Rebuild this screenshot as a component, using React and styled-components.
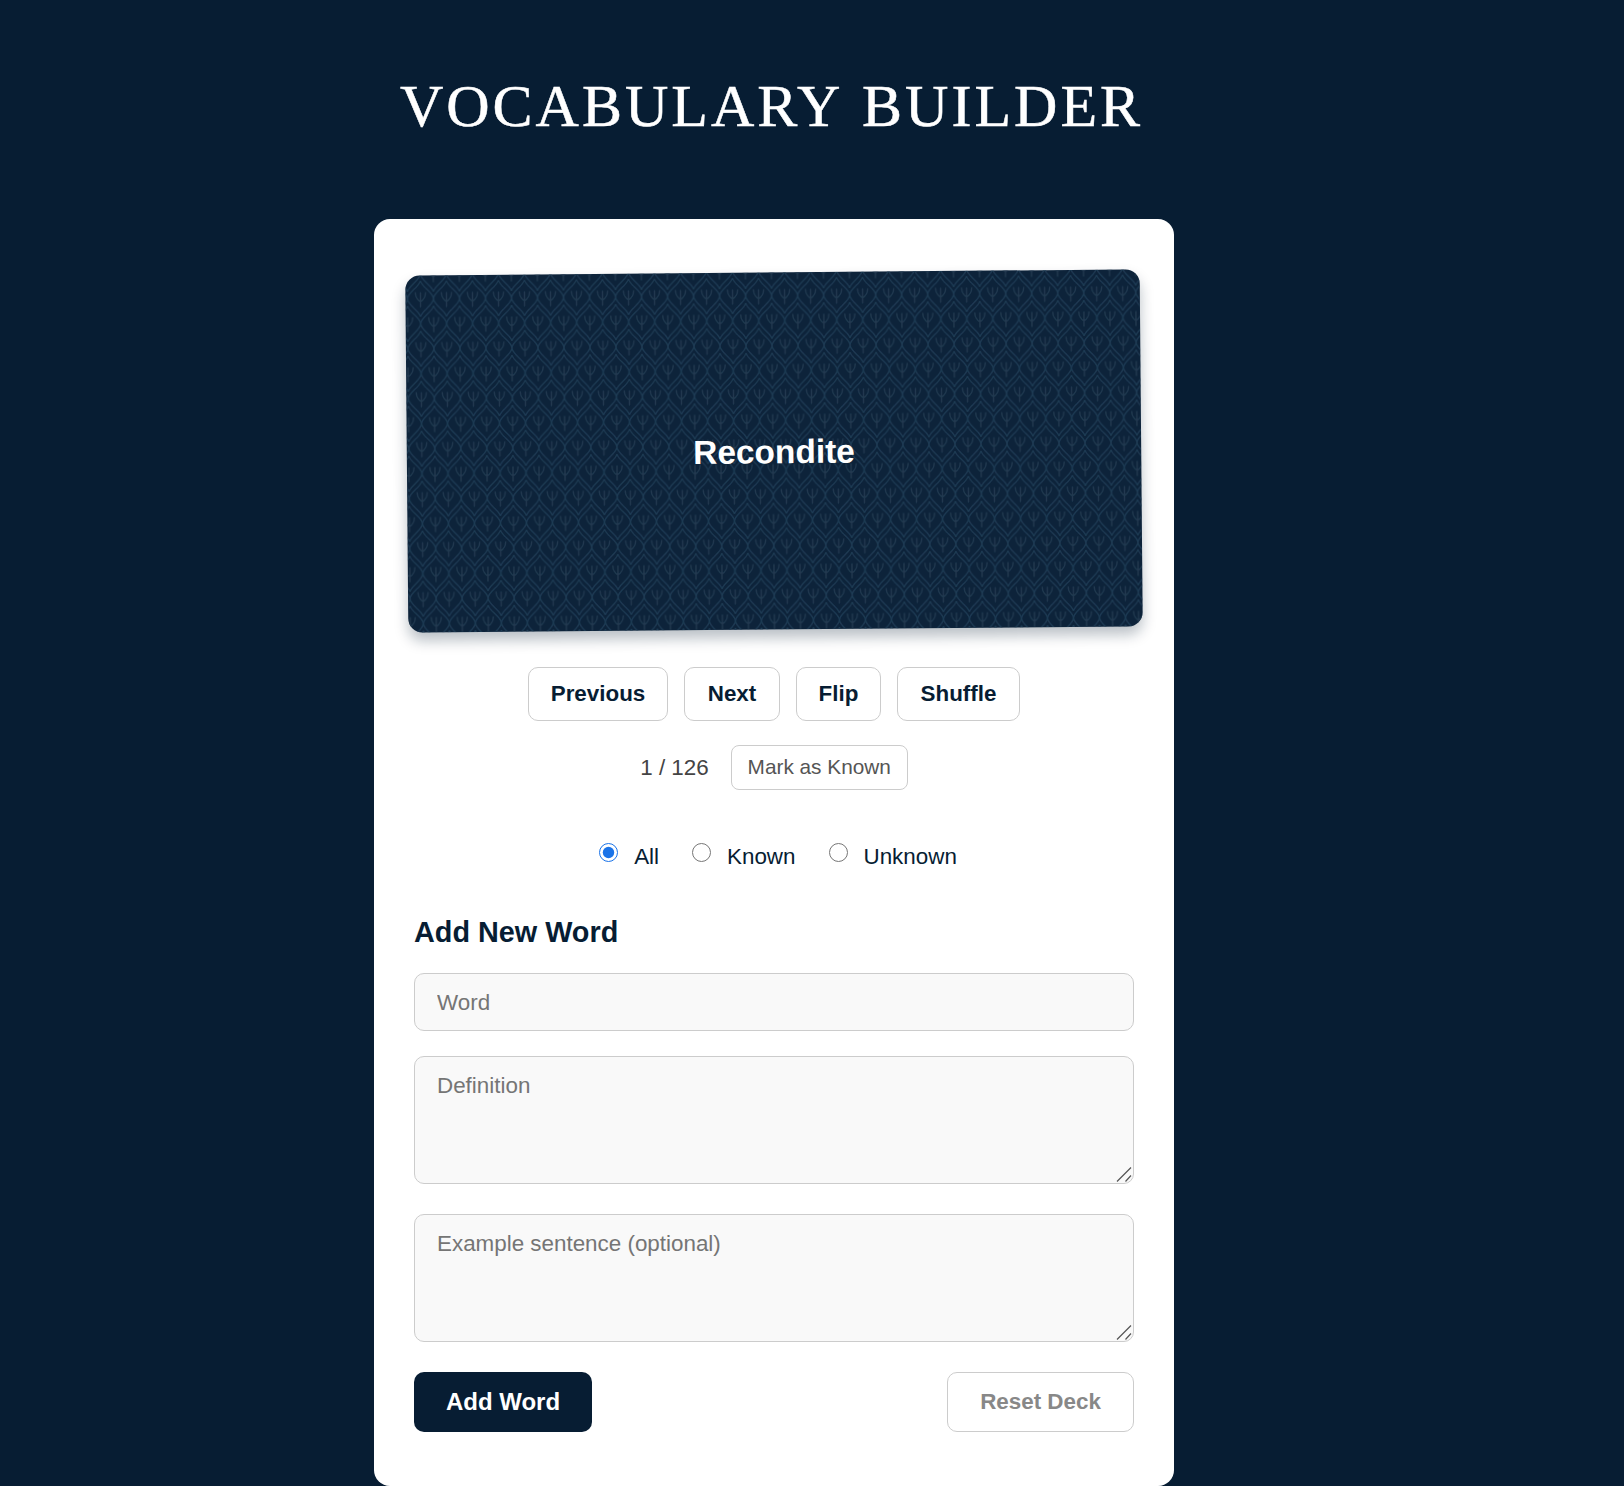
import React from "react";
import styled, { createGlobalStyle } from "styled-components";

const Global = createGlobalStyle`
  html, body { margin: 0; padding: 0; background: #071d33; }
  body { font-family: "Liberation Sans", Arial, sans-serif; }
  * { box-sizing: border-box; }
`;

const Page = styled.div`
  width: 800px;
  margin-left: 374px;
  height: 1486px;
  display: flex;
  flex-direction: column;
  overflow: hidden;
`;

const Title = styled.h1`
  margin: 0;
  height: 219px;
  padding: 69px 5px 0 0;
  text-align: center;
  font-family: "Liberation Serif", serif;
  font-weight: 400;
  font-size: 60px;
  line-height: 74px;
  letter-spacing: 3px;
  word-spacing: 3px;
  -webkit-text-stroke: 0.5px #ffffff;
  color: #ffffff;
  white-space: nowrap;
`;

const Panel = styled.main`
  flex: 1;
  background: #ffffff;
  border-radius: 16px;
  padding: 57px 40px 0;
  display: flex;
  flex-direction: column;
`;

const Flashcard = styled.div`
  position: relative;
  width: 720px;
  height: 350px;
  flex: none;
  border-radius: 14px;
  overflow: hidden;
  background: #0d233a;
  transform: rotate(-0.5deg) scale(1.02);
  box-shadow: 0 8px 14px rgba(7, 29, 51, 0.28);
  display: flex;
  align-items: center;
  justify-content: center;
  padding-top: 2px;
`;

const PatternSvg = styled.svg`
  position: absolute;
  inset: 0;
  width: 100%;
  height: 100%;
`;

const CardWord = styled.div`
  position: relative;
  color: #ffffff;
  font-weight: 700;
  font-size: 32.8px;
  line-height: 40px;
`;

const Controls = styled.div`
  display: flex;
  justify-content: center;
  gap: 16px;
  margin-top: 41px;
`;

const ControlButton = styled.button`
  width: ${(p) => p.$w}px;
  height: 54px;
  padding: 0;
  background: #ffffff;
  border: 1px solid #cccccc;
  border-radius: 10px;
  color: #071d33;
  font-family: inherit;
  font-weight: 700;
  font-size: 22.4px;
`;

const Status = styled.div`
  display: flex;
  justify-content: center;
  align-items: center;
  gap: 22px;
  margin-top: 24px;
  height: 45px;
`;

const Counter = styled.span`
  font-size: 22.4px;
  color: #444444;
`;

const MarkButton = styled.button`
  width: 177px;
  height: 45px;
  padding: 0 0 2px;
  background: #ffffff;
  border: 1px solid #cccccc;
  border-radius: 8px;
  color: #555555;
  font-family: inherit;
  font-size: 20.8px;
`;

const Filters = styled.div`
  display: flex;
  justify-content: center;
  gap: 33px;
  margin-top: 53px;
  padding-left: 8px;
  height: 26px;
`;

const FilterLabel = styled.label`
  display: flex;
  align-items: flex-start;
  gap: 16px;
  font-size: 22.4px;
  line-height: 27px;
  color: #071d33;
`;

const Radio = styled.input`
  width: 19px;
  height: 19px;
  margin: 0;
  accent-color: #1a73e8;
`;

const Form = styled.form`
  display: flex;
  flex-direction: column;
  margin-top: 45px;
`;

const Heading = styled.h2`
  margin: 0 0 23px;
  font-size: 28.8px;
  line-height: 36px;
  font-weight: 700;
  color: #071d33;
`;

const fieldStyles = `
  width: 100%;
  display: block;
  background: #f9f9f9;
  border: 1px solid #cccccc;
  border-radius: 10px;
  padding: 0 22px;
  font-family: "Liberation Sans", Arial, sans-serif;
  font-size: 22.4px;
  color: #071d33;
  &::placeholder { color: #757575; opacity: 1; }
`;

const TextField = styled.input`
  ${fieldStyles}
  height: 58px;
  padding-top: 1px;
  margin-bottom: 25px;
`;

const AreaWrap = styled.div`
  position: relative;
  margin-bottom: ${(p) => p.$gap}px;
`;

const TextArea = styled.textarea`
  ${fieldStyles}
  height: 128px;
  padding-top: 16px;
  padding-bottom: 15px;
  line-height: 26px;
  resize: vertical;
  &::-webkit-resizer { background: transparent; }
`;

const GripSvg = styled.svg`
  position: absolute;
  right: 2px;
  bottom: 2px;
  width: 16px;
  height: 16px;
  pointer-events: none;
`;

const Actions = styled.div`
  display: flex;
  justify-content: space-between;
`;

const AddButton = styled.button`
  width: 178px;
  height: 60px;
  background: #071d33;
  border: none;
  border-radius: 10px;
  color: #ffffff;
  font-family: inherit;
  font-weight: 700;
  font-size: 24px;
`;

const ResetButton = styled.button`
  width: 187px;
  height: 60px;
  background: #ffffff;
  border: 1px solid #cccccc;
  border-radius: 10px;
  color: #888888;
  font-family: inherit;
  font-weight: 700;
  font-size: 22.4px;
`;

const Grip = () => (
  <GripSvg viewBox="0 0 16 16" aria-hidden="true">
    <path d="M1 15.5L15 1.5M9.5 15.5L15 9.5" stroke="#555555" strokeWidth="1.2" fill="none" />
  </GripSvg>
);

const CENTERS = [
  [13, 12], [0, 37], [26, 37], [13, 62], [0, -13], [26, -13],
];

const Motif = ({ x, y }) => (
  <g transform={`translate(${x} ${y})`}>
    <path d="M0 -18C1 -12 13 -6 13 0C13 6 1 12 0 18C-1 12 -13 6 -13 0C-13 -6 -1 -12 0 -18Z" stroke="#1e3a53" />
    <path d="M0 8V-6M0 3C-3 1 -5 -2 -5 -6M0 3C3 1 5 -2 5 -6" stroke="#20394f" />
  </g>
);

const Lattice = () => (
  <PatternSvg aria-hidden="true">
    <defs>
      <filter id="soft">
        <feGaussianBlur stdDeviation="0.4" />
      </filter>
      <pattern id="ogee" width="25.5" height="49" patternUnits="userSpaceOnUse" x="2" y="11">
        <g transform="scale(0.98)" fill="none" strokeWidth="1.4" strokeLinecap="round" filter="url(#soft)">
          {CENTERS.map(([x, y]) => <Motif key={`${x}-${y}`} x={x} y={y} />)}
        </g>
      </pattern>
    </defs>
    <rect width="100%" height="100%" fill="url(#ogee)" />
  </PatternSvg>
);

export default function App() {
  return (
    <>
      <Global />
      <Page>
        <Title>VOCABULARY BUILDER</Title>
        <Panel>
          <Flashcard>
            <Lattice />
            <CardWord>Recondite</CardWord>
          </Flashcard>
          <Controls>
            <ControlButton $w={140}>Previous</ControlButton>
            <ControlButton $w={96}>Next</ControlButton>
            <ControlButton $w={85}>Flip</ControlButton>
            <ControlButton $w={123}>Shuffle</ControlButton>
          </Controls>
          <Status>
            <Counter>1 / 126</Counter>
            <MarkButton>Mark as Known</MarkButton>
          </Status>
          <Filters>
            <FilterLabel><Radio type="radio" name="f" defaultChecked />All</FilterLabel>
            <FilterLabel><Radio type="radio" name="f" />Known</FilterLabel>
            <FilterLabel><Radio type="radio" name="f" />Unknown</FilterLabel>
          </Filters>
          <Form>
            <Heading>Add New Word</Heading>
            <TextField placeholder="Word" />
            <AreaWrap $gap={30}>
              <TextArea placeholder="Definition" />
              <Grip />
            </AreaWrap>
            <AreaWrap $gap={30}>
              <TextArea placeholder="Example sentence (optional)" />
              <Grip />
            </AreaWrap>
            <Actions>
              <AddButton type="button">Add Word</AddButton>
              <ResetButton type="button">Reset Deck</ResetButton>
            </Actions>
          </Form>
        </Panel>
      </Page>
    </>
  );
}
